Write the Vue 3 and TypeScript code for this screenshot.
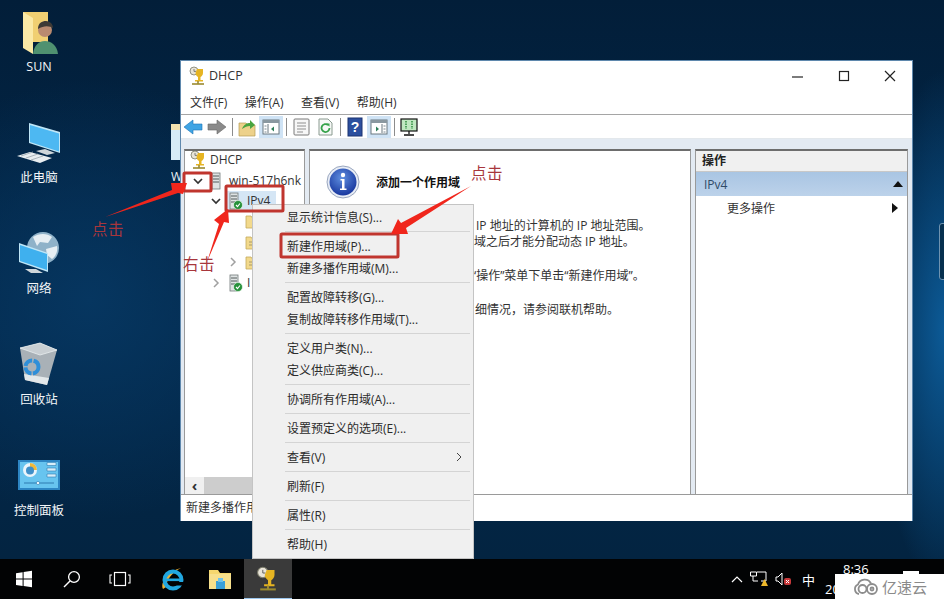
<template>
  <div class="desktop">
    <!-- desktop icons -->
    <div v-for="d in desktopIcons" :key="d.label" class="desk-icon" :style="{ top: d.top + 'px' }">
      <svg width="64" height="50" viewBox="0 0 64 50" v-html="d.svg"></svg>
      <span>{{ d.label }}</span>
    </div>
    <div class="hidden-icon">
      <i></i>
      <span>W</span>
    </div>
    <i class="edge-gadget"></i>

    <!-- DHCP console window -->
    <section class="window">
      <header class="titlebar">
        <svg class="app-icon" width="18" height="20" viewBox="0 0 18 20" v-html="trophy"></svg>
        <span class="title">DHCP</span>
        <div class="caption">
          <svg width="46" height="30" viewBox="0 0 46 30"><path d="M17 16h11" stroke="#222" stroke-width="1.2" /></svg>
          <svg width="46" height="30" viewBox="0 0 46 30"><rect x="18.5" y="10.5" width="9" height="9" fill="none" stroke="#222" stroke-width="1.2" /></svg>
          <svg width="46" height="30" viewBox="0 0 46 30"><path d="M18 10l10 10M28 10l-10 10" stroke="#222" stroke-width="1.2" /></svg>
        </div>
      </header>
      <nav class="menubar">
        <span v-for="m in menus" :key="m">{{ m }}</span>
      </nav>
      <div class="toolbar">
        <template v-for="(t, i) in tools" :key="i">
          <i v-if="t === 'sep'" class="tool-sep"></i>
          <span v-else class="tool" :class="{ active: t.active }">
            <svg width="20" height="20" viewBox="0 0 20 20" v-html="t.svg"></svg>
          </span>
        </template>
      </div>
      <div class="panes">
        <aside class="tree-pane">
          <div class="tree">
            <div v-for="r in treeRows" :key="r.id" class="tree-row" :style="{ paddingLeft: r.indent + 'px' }">
              <svg v-if="r.id !== 1" class="chev" width="14" height="14" viewBox="0 0 14 14">
                <path v-if="r.open === true" d="M3 5l4 4 4-4" fill="none" stroke="#333" stroke-width="1.7" />
                <path v-else-if="r.open === false" d="M5 3l4 4-4 4" fill="none" stroke="#a0a0a0" stroke-width="1.5" />
              </svg>
              <span class="node" :class="{ selected: r.selected, root: r.id === 1 }">
                <svg class="node-icon" width="16" height="18" viewBox="0 0 16 18" v-html="r.svg"></svg>
                <span v-if="r.label" class="node-label">{{ r.label }}</span>
              </span>
            </div>
          </div>
          <div class="hscroll">
            <span class="arrow">‹</span>
            <i class="thumb"></i>
          </div>
        </aside>
        <main class="center-pane">
          <div class="heading">
            <svg width="34" height="34" viewBox="0 0 34 34">
              <defs>
                <radialGradient id="infoBall" cx="45%" cy="35%" r="70%">
                  <stop offset="0" stop-color="#5f8fe0" />
                  <stop offset="1" stop-color="#13319a" />
                </radialGradient>
              </defs>
              <circle cx="17" cy="17" r="16" fill="#e8edf6" stroke="#9aa7bf" />
              <circle cx="17" cy="17" r="13.5" fill="url(#infoBall)" />
              <circle cx="17" cy="10" r="2.2" fill="#fff" />
              <path d="M14.5 14h4v9.5h2V25h-6.5v-1.5h2V15.5h-1.5z" fill="#fff" />
            </svg>
            <strong>添加一个作用域</strong>
          </div>
          <!-- the start of each line sits under the context menu -->
          <p
            v-for="(line, i) in helpLines"
            :key="i"
            class="help"
            :class="'gap' + line.gap"
            :style="{ paddingLeft: line.indent + 'px' }"
          >{{ line.text }}</p>
        </main>
        <aside class="action-pane">
          <div class="action-head">操作</div>
          <div class="action-group">
            <span>IPv4</span>
            <svg width="10" height="6" viewBox="0 0 10 6"><path d="M0 6l5-6 5 6z" fill="#111" /></svg>
          </div>
          <div class="action-item">
            <span>更多操作</span>
            <svg width="6" height="10" viewBox="0 0 6 10"><path d="M0 0l6 5-6 5z" fill="#111" /></svg>
          </div>
        </aside>
      </div>
      <footer class="statusbar"><span>新建多播作用</span></footer>
    </section>

    <!-- context menu -->
    <div class="ctx-menu">
      <template v-for="(c, i) in contextItems" :key="i">
        <div v-if="c === '-'" class="ctx-sep"></div>
        <div v-else class="ctx-item">
          <span>{{ c }}</span>
          <svg v-if="c.startsWith('查看')" width="6" height="10" viewBox="0 0 6 10"><path d="M1 1l4 4-4 4" fill="none" stroke="#444" /></svg>
        </div>
      </template>
    </div>

    <!-- red annotations -->
    <svg class="marks" width="944" height="599" viewBox="0 0 944 599">
      <g fill="none" stroke="#c0352e" stroke-width="3">
        <rect x="184" y="173" width="27" height="18" rx="1" />
        <rect x="226" y="186" width="57" height="25" rx="1" />
        <rect x="281" y="234" width="117" height="23" rx="1" />
      </g>
      <g fill="#f0261c">
        <polygon points="105,217 172,190 171,183 187,183 183,194 178,193" />
        <polygon points="207,262 219,224 214,220 228,209 229,223 224,222" />
        <polygon points="471,186 406,228 408,234 391,234 398,219 401,223" />
      </g>
    </svg>
    <span class="note n1">点击</span>
    <span class="note n2">右击</span>
    <span class="note n3">点击</span>

    <!-- taskbar -->
    <footer class="taskbar">
      <span class="task-btn">
        <svg width="18" height="18" viewBox="0 0 18 18"><path d="M1 3.2l6.6-1v6.4H1zM8.6 2L17 .8v7.8H8.6zM1 9.6h6.6V16L1 15zM8.6 9.6H17v7.6l-8.4-1.2z" fill="#fff" /></svg>
      </span>
      <span class="task-btn">
        <svg width="20" height="20" viewBox="0 0 20 20"><circle cx="12" cy="8" r="5.4" fill="none" stroke="#fff" stroke-width="1.3" /><path d="M8 12l-6 6" stroke="#fff" stroke-width="1.5" /></svg>
      </span>
      <span class="task-btn">
        <svg width="22" height="16" viewBox="0 0 22 16"><rect x="5.5" y="1.5" width="11" height="13" fill="none" stroke="#fff" stroke-width="1.2" /><path d="M3 4H1v8h2M19 4h2v8h-2" fill="none" stroke="#fff" stroke-width="1.1" /></svg>
      </span>
      <span class="task-btn ie">
        <svg width="24" height="24" viewBox="0 0 24 24">
          <path d="M3 22C0 15 8 4 21 1c-6 3-14 9-15 19z" fill="#e8b23a" />
          <circle cx="13" cy="13" r="8.5" fill="none" stroke="#21a7e0" stroke-width="4" />
          <rect x="6" y="11.5" width="15" height="2.6" fill="#21a7e0" />
          <rect x="15" y="15" width="9" height="3.5" fill="#020304" />
        </svg>
      </span>
      <span class="task-btn">
        <svg width="24" height="22" viewBox="0 0 24 22">
          <path d="M1 2h9l2 3h11v16H1z" fill="#f5d76e" />
          <rect x="1" y="6" width="22" height="15" fill="#f7e08c" />
          <rect x="8" y="13" width="9" height="8" fill="#3aa0d8" />
          <rect x="10" y="10" width="5" height="4" fill="#6fc3ea" />
        </svg>
      </span>
      <span class="task-btn running">
        <svg width="24" height="26" viewBox="0 0 18 20" v-html="trophy"></svg>
      </span>
      <div class="tray">
        <svg width="12" height="8" viewBox="0 0 12 8"><path d="M1 7l5-5 5 5" fill="none" stroke="#fff" stroke-width="1.2" /></svg>
        <svg width="18" height="16" viewBox="0 0 18 16">
          <path d="M.5 1h6v4h-6zM7 1h9v9h-5M3 5v5h5" fill="none" stroke="#fff" />
          <path d="M11 15l3.500-7 3.500 7z" fill="#eeb82a" />
        </svg>
        <svg width="16" height="14" viewBox="0 0 16 14">
          <path d="M1 5h2l4-4v12L3 9H1z" fill="none" stroke="#fff" />
          <rect x="9" y="6" width="7" height="7" rx="2" fill="#c8383a" />
          <path d="M11 8l3 3M14 8l-3 3" stroke="#fff" />
        </svg>
        <span class="ime">中</span>
      </div>
      <div class="clock">
        <span class="time">8:36</span>
        <span class="date">20</span>
      </div>
    </footer>

    <!-- site watermark -->
    <div class="watermark">
      <svg width="26" height="18" viewBox="0 0 26 18">
        <g fill="none" stroke="#8c8c8c" stroke-width="1.8">
          <path d="M6 16a5 5 0 0 1-1-9.500 7 7 0 0 1 13-1" />
          <circle cx="9.500" cy="11" r="4" />
          <circle cx="19" cy="11" r="5" />
          <circle cx="19" cy="11" r="1.500" />
        </g>
      </svg>
      <span>亿速云</span>
    </div>
    <i class="wm-nub"></i>
  </div>
</template>

<script setup lang="ts">
interface Tool {
  svg: string;
  active?: boolean;
}

// 16x18 tree glyphs
const trophy = `
  <circle cx="5" cy="5" r="4" fill="#e8e4d8" stroke="#7a7a6a" stroke-width=".8"/>
  <path d="M5 3v2.400h2" stroke="#555" stroke-width=".7" fill="none"/>
  <path d="M8 3h6v4c0 2-1.500 3.500-2.500 4v3h2.500v1.500H6V14h3v-3C7.500 10 6.500 8.500 6.500 7z" fill="#e6b422"/>
  <path d="M3 18h12" stroke="#9a8a30" stroke-width="1.600"/>
  <path d="M9 15v3" stroke="#9a8a30" stroke-width="1.600"/>`;
const server = `
  <rect x="3" y="1" width="8" height="16" fill="#dfe3e3" stroke="#6f7878" stroke-width=".8"/>
  <path d="M4 4h6M4 7h6M4 10h6" stroke="#525a5a"/>`;
const serverOk = `${server}
  <circle cx="11" cy="13" r="4.500" fill="#27913a" stroke="#fff" stroke-width=".6"/>
  <path d="M9 13l1.500 1.600L13 11.500" stroke="#fff" stroke-width="1.100" fill="none"/>`;
const folder = `
  <path d="M2 4h5l1.500 2H14v10H2z" fill="#f2d98c" stroke="#c4a95a" stroke-width=".8"/>`;
const folderDoc = `${folder}
  <path d="M5 9h7M5 12h7" stroke="#a89a6a"/>`;

const desktopIcons = [
  {
    label: "SUN",
    top: 10,
    svg: `<path d="M23 2h25v30H33z" fill="#f0cf72"/>
      <path d="M23 2l10 6v36l-10-6z" fill="#fbe9a6"/>
      <path d="M33 44c1-9 6-13 12-13s12 4 13 13z" fill="#4f9170"/>
      <circle cx="45" cy="20" r="7" fill="#b98a70"/>
      <path d="M38 19c0-6 4-8 8-8s7 3 7 7c-3-2-9-3-15 1z" fill="#3d3a36"/>`,
  },
  {
    label: "此电脑",
    top: 121,
    svg: `<path d="M29 2l31 9v21l-31-10z" fill="#bfe6f7"/>
      <path d="M30 4l29 8.500v18L30 21z" fill="#4db8f2"/>
      <path d="M36 30l9-2 10 4-8 2z" fill="#cfd6da"/>
      <path d="M17 35l13-4 22 6-12 5z" fill="#e8edf0"/>
      <path d="M21 35l12-4M26 37l12-4M31 39l12-4" stroke="#9aa6ad" stroke-width=".8"/>`,
  },
  {
    label: "网络",
    top: 232,
    svg: `<circle cx="43" cy="16" r="16" fill="#8fb2c9"/>
      <path d="M33 5c6-4 14-4 19 0l-4 6-8-1-3 4zM46 17l11-3c1 5-1 10-5 13l-5-4z" fill="#e6eef3"/>
      <path d="M19 11l29 10v19l-29-10z" fill="#bfe6f7"/>
      <path d="M20 13l27 9v16l-27-9z" fill="#3fb0ee"/>
      <path d="M25 37l11 0 7 4-12 0z" fill="#cfd6da"/>`,
  },
  {
    label: "回收站",
    top: 343,
    svg: `<path d="M20 5l20-5 17 7-10 35-22-5z" fill="#a9b1b7"/>
      <path d="M20 5l20-5 17 7-17 5z" fill="#c9cfd3" stroke="#e9edef" stroke-width=".8"/>
      <path d="M24 31l25 4-2 7-22-5z" fill="#e3e8ea"/>
      <circle cx="32" cy="24" r="6.500" fill="none" stroke="#2f8fd8" stroke-width="4" stroke-dasharray="9 1.500"/>`,
  },
  {
    label: "控制面板",
    top: 454,
    svg: `<rect x="18" y="6" width="42" height="30" fill="#2d86c4"/>
      <rect x="20" y="8" width="38" height="26" fill="#67c4ef"/>
      <circle cx="30" cy="16" r="7" fill="#eaf5fb"/><path d="M30 16v-7a7 7 0 0 1 7 7z" fill="#f0b93a"/>
      <circle cx="30" cy="16.500" r="4" fill="#3f8fc8"/>
      <path d="M47 8.500h9v3h-9zM47 14h9v3h-9zM47 20h9v3h-9z" fill="#d8eef9" stroke="#2f7bb0" stroke-width=".6"/>
      <path d="M24 29h30" stroke="#2f7bb0"/><circle cx="38" cy="29" r="1.600" fill="#fff" stroke="#2f7bb0" stroke-width=".6"/>`,
  },
];

const menus = ["文件(F)", "操作(A)", "查看(V)", "帮助(H)"];

const paneIcon = (flip: boolean) => `
  <rect x="2" y="3" width="16" height="14" fill="#fff" stroke="#6a7880"/>
  <rect x="2" y="3" width="16" height="3" fill="#8a98a0"/>
  <path d="M${flip ? 13 : 7} 7v9" stroke="#6a7880"/>
  <path d="${flip ? "M7 9.500l3 2.500-3 2.500z" : "M13 9.500l-3 2.500 3 2.500z"}" fill="#2f7f5a"/>
  <path d="${flip ? "M14.500 9h2M14.500 12h2M14.500 15h2" : "M3.500 9h2M3.500 12h2M3.500 15h2"}" stroke="#7a8890"/>`;

const tools: (Tool | "sep")[] = [
  { svg: `<path d="M1 10l9-7v4h9v6h-9v4z" fill="#3fa4e4" stroke="#1d73b5" stroke-width=".6"/>` },
  { svg: `<path d="M19 10l-9-7v4H1v6h9v4z" fill="#8a8a8a" stroke="#666" stroke-width=".6"/>` },
  "sep",
  { svg: `<path d="M2 6h7l2 2h7v11H2z" fill="#edd18a" stroke="#b59c55" stroke-width=".7"/><path d="M5 12c2-5 5-6 8-6V3l5 5-5 4V9c-3 0-5 1-8 3z" fill="#49a43f"/>` },
  { svg: paneIcon(false), active: true },
  "sep",
  { svg: `<rect x="3" y="2" width="15" height="16" rx="1" fill="#f7f7f7" stroke="#7b7b7b"/><path d="M6 6h9M6 9h9M6 12h9M6 15h6" stroke="#8f8f8f"/>` },
  { svg: `<path d="M4 2h9l4 4v12H4z" fill="#f6f8f6" stroke="#8a9a90"/><path d="M14.500 11a4 4 0 1 1-1.400-3" fill="none" stroke="#36a24a" stroke-width="1.800"/><path d="M11 6.500h3.500v3.200z" fill="#36a24a"/>` },
  "sep",
  { svg: `<rect x="3" y="1" width="14" height="18" fill="#2c4f9e" stroke="#1b3270"/><text x="10" y="15" font-size="14" font-weight="700" text-anchor="middle" fill="#fff" font-family="Liberation Sans, sans-serif">?</text>` },
  { svg: paneIcon(true), active: true },
  "sep",
  { svg: `<rect x="2" y="2" width="16" height="12" fill="#bfe8c0" stroke="#111" stroke-width="1.200"/><path d="M7 4v8M13 4v8" stroke="#2c8a3c" stroke-width="1.500" stroke-dasharray="1.500 1"/><path d="M10 14v3M5 18h10" stroke="#111" stroke-width="1.300"/>` },
];

const treeRows = [
  { id: 1, indent: 1, open: null, svg: trophy, label: "DHCP" },
  { id: 2, indent: 6, open: true, svg: server, label: "win-517h6nk" },
  { id: 3, indent: 24, open: true, svg: serverOk, label: "IPv4", selected: true },
  { id: 4, indent: 41, open: null, svg: folder, label: "" },
  { id: 5, indent: 41, open: null, svg: folderDoc, label: "" },
  { id: 6, indent: 41, open: false, svg: folderDoc, label: "" },
  { id: 7, indent: 24, open: false, svg: serverOk, label: "I" },
];

const helpLines = [
  { text: "IP 地址的计算机的 IP 地址范围。", gap: 0, indent: 100 },
  { text: "域之后才能分配动态 IP 地址。", gap: 0, indent: 98 },
  { text: "“操作”菜单下单击“新建作用域”。", gap: 1, indent: 96 },
  { text: "细情况，请参阅联机帮助。", gap: 1, indent: 99 },
];

const contextItems = [
  "显示统计信息(S)...",
  "-",
  "新建作用域(P)...",
  "新建多播作用域(M)...",
  "-",
  "配置故障转移(G)...",
  "复制故障转移作用域(T)...",
  "-",
  "定义用户类(N)...",
  "定义供应商类(C)...",
  "-",
  "协调所有作用域(A)...",
  "-",
  "设置预定义的选项(E)...",
  "-",
  "查看(V)",
  "-",
  "刷新(F)",
  "-",
  "属性(R)",
  "-",
  "帮助(H)",
];
</script>

<style scoped>
.desktop {
  position: relative;
  width: 944px;
  height: 599px;
  overflow: hidden;
  font-family: "Open Sans", "Noto Sans CJK SC", sans-serif;
  font-size: 12px;
  color: #222;
  background:
    radial-gradient(ellipse 220px 220px at 90px 300px, #063660 0%, rgba(6, 54, 96, 0) 100%),
    radial-gradient(ellipse 70px 260px at 944px 330px, #0c5a96 0%, rgba(12, 90, 150, 0) 100%),
    linear-gradient(180deg, #021e39 0%, #03294c 55%, #03233f 100%);
}

.desk-icon {
  position: absolute;
  left: 7px;
  width: 64px;
  display: flex;
  flex-direction: column;
  align-items: center;
  color: #f2f5f8;
  font-size: 12.5px;
  line-height: 16px;
}
.desk-icon svg {
  display: block;
  overflow: visible;
  margin-bottom: -1px;
  transform: translateX(-7px);
}

.hidden-icon {
  position: absolute;
  left: 171px;
  top: 124px;
  width: 9px;
  overflow: hidden;
  color: #eef2f6;
}
.hidden-icon i {
  display: block;
  width: 16px;
  height: 36px;
  background: #d7ecf7;
  border-top: 6px solid #f3e2b0;
  box-sizing: border-box;
}
.hidden-icon span {
  display: block;
  margin-top: 9px;
  line-height: 16px;
}
.edge-gadget {
  position: absolute;
  left: 939px;
  top: 223px;
  width: 12px;
  height: 57px;
  border: 1px solid #6f93b0;
  border-radius: 3px;
  box-sizing: border-box;
  background: #06304f;
}

.window {
  position: absolute;
  left: 180px;
  top: 60px;
  width: 733px;
  height: 461px;
  box-sizing: border-box;
  display: flex;
  flex-direction: column;
  background: #fff;
  border: 1px solid #5f88ad;
  border-bottom: 0;
}
.titlebar {
  height: 29px;
  display: flex;
  align-items: center;
  padding-left: 8px;
  gap: 2px;
  flex: none;
}
.titlebar .title {
  font-size: 12.5px;
  color: #333;
}
.caption {
  margin-left: auto;
  margin-right: -1px;
  display: flex;
}
.menubar {
  height: 25px;
  flex: none;
  display: flex;
  align-items: center;
  gap: 17.5px;
  padding-left: 9px;
  color: #303030;
  border-bottom: 1px solid #a5a5a5;
  box-sizing: border-box;
}
.toolbar {
  height: 23px;
  flex: none;
  display: flex;
  align-items: center;
  background: #fff;
  border-bottom: 1px solid #e3e8ec;
}
.tool {
  width: 24px;
  height: 22px;
  display: flex;
  align-items: center;
  justify-content: center;
  flex: none;
}
.tool.active {
  background: #cfe3f5;
}
.tool svg {
  display: block;
}
.tool-sep {
  width: 1px;
  height: 18px;
  background: #8c8c8c;
  margin: 0 2px 0 3px;
  flex: none;
}
.panes {
  flex: 1;
  min-height: 0;
  display: flex;
  gap: 4px;
  padding: 10px 4px 0 3px;
  background: #e3eaf2;
}
.tree-pane {
  width: 121px;
  flex: none;
  display: flex;
  flex-direction: column;
  background: #fff;
  border: 1px solid #9a9a9a;
  border-top: 2px solid #6d6d6d;
  border-bottom: 0;
  box-sizing: border-box;
}
.tree {
  flex: 1;
  margin-top: -1px;
  overflow: hidden;
  white-space: nowrap;
}
.tree-row {
  height: 20.4px;
  display: flex;
  align-items: center;
}
.chev {
  flex: none;
}
.node {
  display: flex;
  align-items: center;
  height: 20px;
  margin-left: 3px;
  padding: 0 6px 0 1px;
  flex: none;
}
.node.selected {
  background: #d5e6f5;
}
.node-icon {
  flex: none;
  overflow: visible;
}
.node-label {
  margin-left: 4px;
  color: #333;
}
.node.root {
  margin-top: -2px;
}
.hscroll {
  height: 17px;
  flex: none;
  display: flex;
  align-items: center;
  background: #f0f0f0;
}
.hscroll .arrow {
  width: 19px;
  text-align: center;
  font-weight: 700;
  font-size: 15px;
  line-height: 15px;
  color: #333;
}
.hscroll .thumb {
  flex: 1;
  height: 17px;
  background: #cdcdcd;
}
.center-pane {
  flex: 1;
  min-width: 0;
  background: #fff;
  border: 1px solid #9a9a9a;
  border-top: 2px solid #6d6d6d;
  border-bottom: 0;
  padding: 14px 0 0 16px;
  box-sizing: border-box;
  white-space: nowrap;
}
.heading {
  display: flex;
  align-items: center;
  gap: 16px;
  height: 34px;
  margin-bottom: 19px;
}
.heading strong {
  font-size: 12px;
  color: #111;
}
.help {
  margin: 0 0 0 50px;
  line-height: 16px;
  color: #333;
}
.help.gap1 {
  margin-top: 18px;
}
.action-pane {
  width: 213px;
  flex: none;
  background: #fff;
  border: 1px solid #9a9a9a;
  border-top: 2px solid #6d6d6d;
  border-bottom: 0;
  box-sizing: border-box;
}
.action-head {
  height: 20px;
  line-height: 20px;
  padding-left: 6px;
  font-weight: 700;
  background: #f0f0f0;
  border-bottom: 1px solid #c8c8c8;
}
.action-group {
  height: 24px;
  padding: 0 4px 0 8px;
  display: flex;
  align-items: center;
  justify-content: space-between;
  background: linear-gradient(180deg, #a9c5e3, #bcd2ea);
  color: #2f4a66;
}
.action-item {
  height: 24px;
  padding: 0 9px 0 31px;
  display: flex;
  align-items: center;
  justify-content: space-between;
  color: #333;
}
.statusbar {
  height: 27px;
  flex: none;
  line-height: 26px;
  padding-left: 5px;
  background: #fff;
  border-top: 1px solid #9a9a9a;
  box-sizing: border-box;
  color: #333;
}

.ctx-menu {
  position: absolute;
  left: 252px;
  top: 204px;
  width: 222px;
  height: 355px;
  box-sizing: border-box;
  padding: 1px 2px 0;
  background: #f0f0f0;
  border: 1px solid #c4c4c4;
  color: #2b2b2b;
}
.ctx-item {
  height: 22px;
  display: flex;
  align-items: center;
  justify-content: space-between;
  padding: 0 9px 0 32px;
}
.ctx-sep {
  height: 1px;
  margin: 3px 1px 3px 30px;
  background: #d4d4d4;
}

.marks {
  position: absolute;
  left: 0;
  top: 0;
  pointer-events: none;
}
.note {
  position: absolute;
  color: #a8363c;
  font-size: 15.5px;
  line-height: 20px;
  letter-spacing: 0.5px;
}
.n1 {
  left: 92px;
  top: 219px;
}
.n2 {
  left: 183px;
  top: 254px;
}
.n3 {
  left: 471px;
  top: 163px;
}

.taskbar {
  position: absolute;
  left: 0;
  right: 0;
  bottom: 0;
  height: 40px;
  background: #020304;
  display: flex;
  align-items: center;
  color: #fff;
}
.task-btn {
  width: 48px;
  height: 40px;
  flex: none;
  display: flex;
  align-items: center;
  justify-content: center;
}
.task-btn.ie {
  margin-left: 4px;
}
.task-btn.running {
  background: #3a3a3a;
  border-bottom: 1px solid #9cc7ee;
  box-sizing: border-box;
}
.tray {
  margin-left: auto;
  display: flex;
  align-items: center;
  gap: 7px;
  margin-right: 10px;
}
.ime {
  font-size: 13px;
  margin-left: 4px;
}
.clock {
  width: 119px;
  flex: none;
  box-sizing: border-box;
  line-height: 20px;
  font-size: 13px;
  display: flex;
  flex-direction: column;
}
.clock .time {
  padding-left: 18px;
}
.watermark {
  position: absolute;
  right: 0;
  bottom: 0;
  width: 109px;
  height: 25px;
  background: #fff;
  display: flex;
  align-items: center;
  gap: 3px;
  padding-left: 18px;
  box-sizing: border-box;
  color: #8a8a8a;
  font-size: 15px;
}
.wm-nub {
  position: absolute;
  left: 903px;
  top: 571px;
  width: 16px;
  height: 3px;
  background: #fff;
}
</style>
